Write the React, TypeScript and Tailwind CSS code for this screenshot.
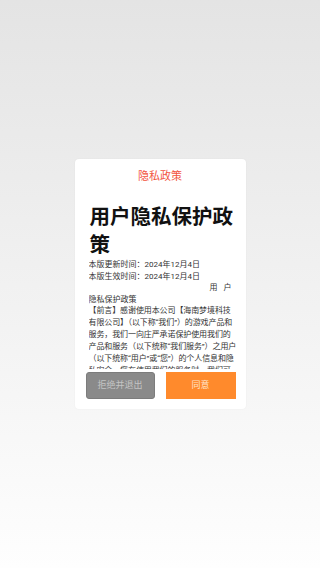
const font = '[font-family:Roboto,"Noto_Sans_CJK_SC",sans-serif]';

const intro = [
  '【前言】感谢使用本公司【海南梦境科技',
  '有限公司】（以下称“我们”）的游戏产品和',
  '服务，我们一向庄严承诺保护使用我们的',
  '产品和服务（以下统称“我们服务”）之用户',
  '（以下统称“用户”或“您”）的个人信息和隐',
  '私安全。您在使用我们的服务时，我们可',
];

export default function App() {
  return (
    <div
      className={`flex h-[568px] w-[320px] items-center justify-center bg-gradient-to-b from-[#e4e4e4] to-[#fefefe] ${font}`}
    >
      <div className="flex w-[171px] flex-col rounded-[4px] bg-white pb-[10px] pt-[10px] shadow-[0_0_2px_rgba(0,0,0,0.06)]">
        <div className="text-center text-[11px] leading-[16px] text-[#f2553f]">隐私政策</div>

        <div className="ml-[14px] mr-[5px] mt-[12px] h-[172px] overflow-hidden">
          <h1 className="mt-[6px] pl-[1px] text-[20.5px] font-semibold leading-[28px] text-[#111]">
            用户隐私保护政策
          </h1>
          <div className="text-[8px] leading-[11.5px] text-[#333]">
            <p>本版更新时间：2024年12月4日</p>
            <p>本版生效时间：2024年12月4日</p>
            <p className="flex justify-end gap-[6px] pr-[9px]">
              <span>用</span>
              <span>户</span>
            </p>
            <p>隐私保护政策</p>
          </div>
          <div className="text-[8px] leading-[12px] tracking-[-0.1px] text-[#333]">
            {intro.map((line) => (
              <p key={line} className="whitespace-nowrap">
                {line}
              </p>
            ))}
          </div>
        </div>

        <div className="mt-[3px] flex justify-between pl-[11px] pr-[10px]">
          <button className="h-[27px] w-[69px] rounded-[3px] border border-[#7c7c7c] bg-[#8a8a8a] text-[9px] text-[#c4c4c4]">
            拒绝并退出
          </button>
          <button className="h-[27px] w-[70px] bg-[#ff8a2c] text-[9px] text-[#ffe2c6]">同意</button>
        </div>
      </div>
    </div>
  );
}
